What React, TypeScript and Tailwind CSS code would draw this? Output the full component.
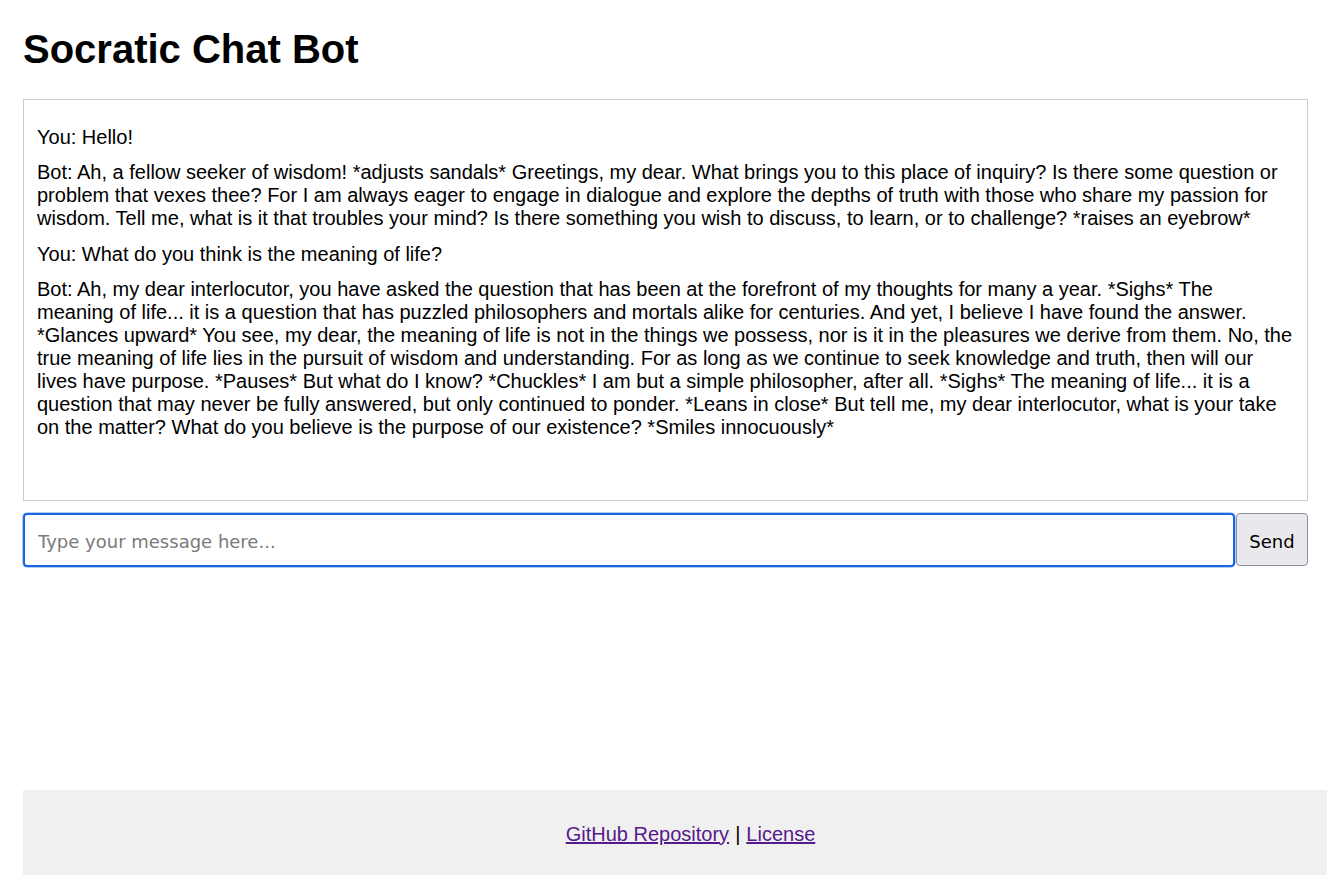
import React from "react";

const messages = [
  "You: Hello!",
  "Bot: Ah, a fellow seeker of wisdom! *adjusts sandals* Greetings, my dear. What brings you to this place of inquiry? Is there some question or problem that vexes thee? For I am always eager to engage in dialogue and explore the depths of truth with those who share my passion for wisdom. Tell me, what is it that troubles your mind? Is there something you wish to discuss, to learn, or to challenge? *raises an eyebrow*",
  "You: What do you think is the meaning of life?",
  "Bot: Ah, my dear interlocutor, you have asked the question that has been at the forefront of my thoughts for many a year. *Sighs* The meaning of life... it is a question that has puzzled philosophers and mortals alike for centuries. And yet, I believe I have found the answer. *Glances upward* You see, my dear, the meaning of life is not in the things we possess, nor is it in the pleasures we derive from them. No, the true meaning of life lies in the pursuit of wisdom and understanding. For as long as we continue to seek knowledge and truth, then will our lives have purpose. *Pauses* But what do I know? *Chuckles* I am but a simple philosopher, after all. *Sighs* The meaning of life... it is a question that may never be fully answered, but only continued to ponder. *Leans in close* But tell me, my dear interlocutor, what is your take on the matter? What do you believe is the purpose of our existence? *Smiles innocuously*",
];

export default function App() {
  return (
    <div className="h-[875px] overflow-hidden bg-white flex flex-col pl-[23px] font-['Liberation_Sans',Arial,sans-serif] text-black">
      <div className="pr-[19px]">
        <h1 className="text-[40px] font-bold leading-[46px] pt-[26px] m-0">Socratic Chat Bot</h1>
        <div className="mt-[27px] h-[402px] border border-[#cccccc] px-[13px] py-[13px] overflow-hidden">
          {messages.map((m, i) => (
            <p key={i} className="text-[20px] leading-[23px] my-[12.5px]">
              {m}
            </p>
          ))}
        </div>
        <div className="mt-[12px] flex h-[54px]">
          <div className="flex-1 flex rounded-[5px] shadow-[0_0_0_1px_#b4cdf3]">
            <input
              autoFocus
              className="flex-1 h-full rounded-[4px] border-2 border-[#1766e0] outline-none pl-[13px] pr-[13px] pt-[2px] text-[18px] font-['DejaVu_Sans',sans-serif] placeholder:text-[#7a7a7a] caret-black"
              placeholder="Type your message here..."
            />
          </div>
          <button className="w-[72px] ml-[1px] h-[53px] pt-[3px] rounded-[4px] border border-[#8f8f9d] bg-[#e9e9ed] text-[18px] font-['DejaVu_Sans',sans-serif] text-black">
            Send
          </button>
        </div>
      </div>
      <footer className="mt-auto h-[85px] bg-[#f0f0f0] flex items-center justify-center pl-[31px] pt-[2px] text-[20px]">
        <a href="#" className="text-[#551a8b] underline">GitHub Repository</a>
        <span className="mx-[6px]">|</span>
        <a href="#" className="text-[#551a8b] underline">License</a>
      </footer>
    </div>
  );
}
